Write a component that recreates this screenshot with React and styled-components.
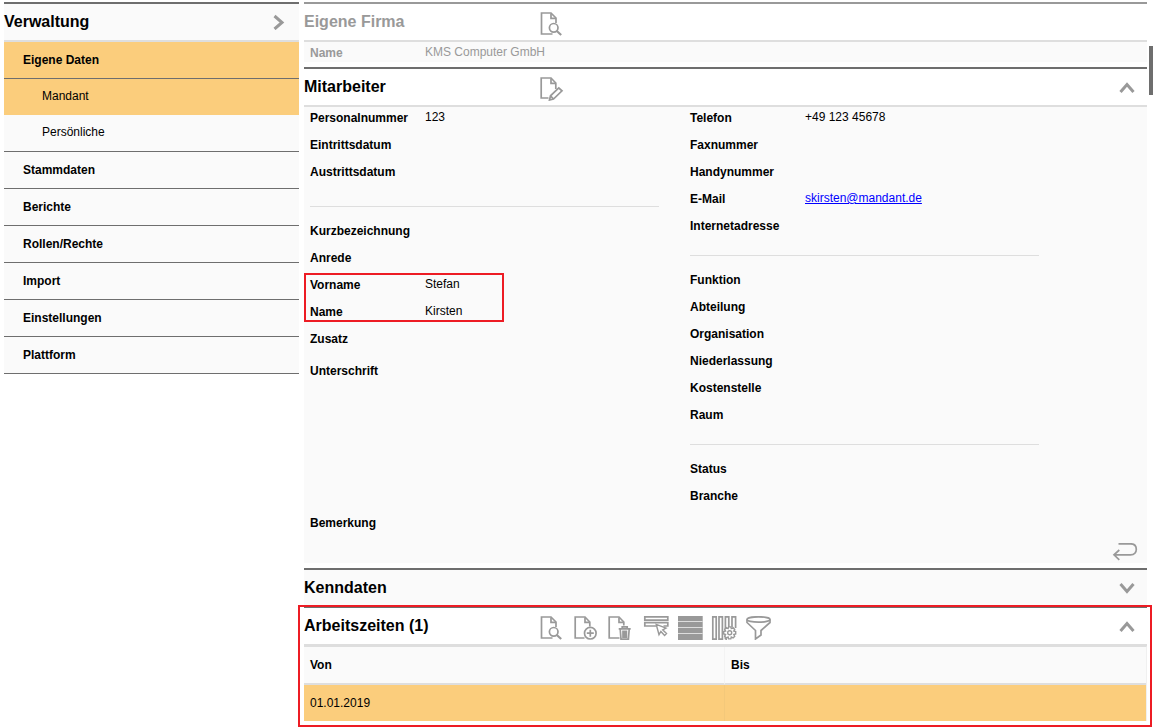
import React, { useState } from 'react'
import styled, { createGlobalStyle, css } from 'styled-components'

const menu = [
  { label: 'Eigene Daten', children: ['Mandant', 'Persönliche'] },
  { label: 'Stammdaten' },
  { label: 'Berichte' },
  { label: 'Rollen/Rechte' },
  { label: 'Import' },
  { label: 'Einstellungen' },
  { label: 'Plattform' },
]

const DocOutline = ({ cut }) => (
  <>
    <path d={cut} />
    <path d="M11 1.5V6.3H16" />
  </>
)

const ViewIcon = () => (
  <Icon viewBox="0 0 28 24">
    <DocOutline cut="M12.5 22H1.5V1H11L16 6V11" />
    <circle cx="13.7" cy="15.8" r="4.3" fill="#fff" />
    <path d="M16.8 19L21.2 23" strokeWidth="2.2" />
  </Icon>
)

const EditIcon = () => (
  <Icon viewBox="0 0 28 24">
    <DocOutline cut="M8.5 21H1.2V1H11L15.8 6V12" />
    <path d="M9.5 23L10.5 18.8L18.8 11L22 13.8L13.5 22Z M10.5 18.8L13.5 22" />
  </Icon>
)

const AddIcon = () => (
  <Icon viewBox="0 0 28 24">
    <DocOutline cut="M10.5 22H1.2V1H11L15.8 6V10.5" />
    <circle cx="16.3" cy="17.2" r="5.8" />
    <path d="M16.3 13.7V20.7M12.8 17.2H19.8" />
  </Icon>
)

const DeleteIcon = () => (
  <Icon viewBox="0 0 28 24">
    <DocOutline cut="M11.5 22H1.2V1H11L15.8 6V9.5" />
    <path d="M10.7 12.8H22.7M14.2 12.5V10.8H19.2V12.5M12.2 13L13 23.2H20.4L21.2 13M15 14.5V22M16.7 14.5V22M18.4 14.5V22" />
  </Icon>
)

const SelectIcon = () => (
  <Icon viewBox="0 0 28 24">
    <path d="M2.8 .8H25.8V4.2H2.8ZM14 10H2.8V6.6H25.8V10H21.5" />
    <path d="M14.2 8.3L24 12L20.7 13.8L24.5 17.6L22.6 19.4L18.9 15.5L17 18.7Z" fill="#fff" strokeWidth="1.4" />
  </Icon>
)

const ListIcon = () => (
  <Icon viewBox="0 0 28 24">
    <path d="M2 0H26.7V24H2Z" fill="#999" stroke="none" />
    <path d="M2 5.5H26.7M2 11.5H26.7M2 17.5H26.7" stroke="#ddd" strokeWidth="1" />
  </Icon>
)

const ColumnsIcon = () => (
  <Icon viewBox="0 0 28 24">
    <path d="M2.8 .8H6.2V23.2H2.8ZM9 .8H12.4V23.2H9ZM15.4 23.2V.8H18.8V11M22 11V.8H25.6V12M15.4 23.2H17" />
    <path d="M18.6 10.9h2.2l.5 1.7 1.8-.9 1.6 1.6-.9 1.8 1.9.5v2.4l-1.9.5.9 1.8-1.6 1.6-1.8-.9-.5 1.9h-2.2l-.5-1.9-1.8.9-1.6-1.6.9-1.8-1.9-.5v-2.4l1.9-.5-.9-1.8 1.6-1.6 1.8.9Z" fill="#fff" strokeWidth="1.4" />
    <circle cx="19.7" cy="16.8" r="2" strokeWidth="1.4" />
  </Icon>
)

const FilterIcon = () => (
  <Icon viewBox="0 0 28 24">
    <ellipse cx="14.5" cy="3.5" rx="11.5" ry="2.7" />
    <path d="M3 3.5V6.5L11.5 14.5V23L17 19V14.5L26 6.5V3.5" />
  </Icon>
)

const BackIcon = () => (
  <Icon viewBox="0 0 28 24">
    <path d="M8.5 .8H20.5C24.5 .8 26.3 3 26.3 6.2S24.5 11.8 20.5 11.8H4M9.3 7L4 11.8L9.3 16.8" />
  </Icon>
)

const rotation = { up: 0, right: 90, down: 180 }

const Chevron = ({ dir, label }) => (
  <ChevronButton type="button" aria-label={label}>
    <svg width="16" height="16" viewBox="0 0 16 16">
      <path
        d="M1.5 13L8 5.5L14.5 13"
        transform={`rotate(${rotation[dir]} 8 8.5)`}
        fill="none"
        stroke="#999"
        strokeWidth="3"
      />
    </svg>
  </ChevronButton>
)

const Tool = ({ label, children }) => (
  <ToolButton type="button" aria-label={label}>{children}</ToolButton>
)

const Field = ({ label, muted, children }) => (
  <FieldRow $muted={muted}>
    <dt>{label}</dt>
    <dd>{children}</dd>
  </FieldRow>
)

const Sidebar = () => {
  const [active, setActive] = useState('Mandant')

  return (
    <StyledSidebar>
      <SidebarHeader>
        <Title>Verwaltung</Title>
        <Chevron dir="right" label="Menü" />
      </SidebarHeader>
      {menu.map(({ label, children = [] }) => (
        <MenuGroup key={label}>
          <MenuItem
            type="button"
            $active={active === label || children.includes(active)}
            onClick={() => setActive(label)}
          >
            {label}
          </MenuItem>
          {children.length > 0 && (
            <SubMenu>
              {children.map((child) => (
                <SubItem key={child} type="button" $active={active === child} onClick={() => setActive(child)}>
                  {child}
                </SubItem>
              ))}
            </SubMenu>
          )}
        </MenuGroup>
      ))}
    </StyledSidebar>
  )
}

const Company = () => (
  <Section $muted>
    <SectionHeader>
      <Title>Eigene Firma</Title>
      <Toolbar>
        <Tool label="Firma anzeigen"><ViewIcon /></Tool>
      </Toolbar>
    </SectionHeader>
    <Summary>
      <Field label="Name" muted>KMS Computer GmbH</Field>
    </Summary>
  </Section>
)

const Employee = () => (
  <Section>
    <SectionHeader>
      <Title>Mitarbeiter</Title>
      <Toolbar>
        <Tool label="Mitarbeiter bearbeiten"><EditIcon /></Tool>
      </Toolbar>
      <Chevron dir="up" label="Zuklappen" />
    </SectionHeader>
    <Details>
      <Columns>
        <div>
          <Fields $spaced>
            <Field label="Personalnummer">123</Field>
            <Field label="Eintrittsdatum" />
            <Field label="Austrittsdatum" />
          </Fields>
          <Divider />
          <Fields $spaced>
            <Field label="Kurzbezeichnung" />
            <Field label="Anrede" />
            <Marked>
              <Field label="Vorname">Stefan</Field>
              <Field label="Name">Kirsten</Field>
            </Marked>
            <Field label="Zusatz" />
          </Fields>
          <Signature>
            <Field label="Unterschrift" />
          </Signature>
          <Fields>
            <Field label="Bemerkung" />
          </Fields>
        </div>
        <div>
          <Fields>
            <Field label="Telefon">+49 123 45678</Field>
            <Field label="Faxnummer" />
            <Field label="Handynummer" />
            <Field label="E-Mail"><a href="mailto:skirsten@mandant.de">skirsten@mandant.de</a></Field>
            <Field label="Internetadresse" />
          </Fields>
          <Divider />
          <Fields>
            <Field label="Funktion" />
            <Field label="Abteilung" />
            <Field label="Organisation" />
            <Field label="Niederlassung" />
            <Field label="Kostenstelle" />
            <Field label="Raum" />
          </Fields>
          <Divider />
          <Fields>
            <Field label="Status" />
            <Field label="Branche" />
          </Fields>
        </div>
      </Columns>
      <DetailsFooter>
        <Tool label="Zurück"><BackIcon /></Tool>
      </DetailsFooter>
    </Details>
  </Section>
)

const WorkingHours = () => (
  <Section $marked>
    <SectionHeader>
      <Title>Arbeitszeiten (1)</Title>
      <Toolbar>
        <Tool label="Anzeigen"><ViewIcon /></Tool>
        <Tool label="Hinzufügen"><AddIcon /></Tool>
        <Tool label="Löschen"><DeleteIcon /></Tool>
        <Tool label="Auswählen"><SelectIcon /></Tool>
        <Tool label="Liste"><ListIcon /></Tool>
        <Tool label="Spalten"><ColumnsIcon /></Tool>
        <Tool label="Filter"><FilterIcon /></Tool>
      </Toolbar>
      <Chevron dir="up" label="Zuklappen" />
    </SectionHeader>
    <Table>
      <thead>
        <tr>
          <th>Von</th>
          <th>Bis</th>
        </tr>
      </thead>
      <tbody>
        <tr>
          <td>01.01.2019</td>
          <td />
        </tr>
      </tbody>
    </Table>
  </Section>
)

const App = () => (
  <>
    <GlobalStyle />
    <Page>
      <Sidebar />
      <Content>
        <Company />
        <Employee />
        <Section>
          <SectionHeader $collapsed>
            <Title>Kenndaten</Title>
            <Chevron dir="down" label="Aufklappen" />
          </SectionHeader>
        </Section>
        <WorkingHours />
      </Content>
      <ScrollTrack>
        <ScrollThumb />
      </ScrollTrack>
    </Page>
  </>
)

export default App

const GlobalStyle = createGlobalStyle`
  *, *::after {
    box-sizing: border-box;
  }

  body {
    margin: 0;
    background: #fff;
    color: #000;
    font-family: 'Liberation Sans', Arial, sans-serif;
    font-size: 12px;
    line-height: 14px;
  }

  button {
    border: 0;
    padding: 0;
    background: none;
    color: inherit;
    font: inherit;
    cursor: pointer;
  }
`

const redFrame = css`
  content: '';
  position: absolute;
  border: 2px solid #ed1c24;
  pointer-events: none;
`

const Page = styled.div`
  display: flex;
  padding: 2px 0 6px 4px;
`

const StyledSidebar = styled.nav`
  flex: 0 0 295px;
  margin-right: 5px;
`

const SidebarHeader = styled.header`
  display: flex;
  align-items: center;
  justify-content: space-between;
  height: 40px;
  padding-right: 12px;
  border-top: 2px solid #6e6e6e;
  border-bottom: 2px solid #dedede;
  background: #fafafa;
`

const Title = styled.h2`
  margin: 0;
  font-size: 16px;
  line-height: 18px;
  font-weight: bold;
`

const MenuGroup = styled.div`
  border-bottom: 1px solid #6e6e6e;
`

const MenuItem = styled.button`
  display: block;
  width: 100%;
  height: 36px;
  padding-left: 19px;
  background: ${({ $active }) => ($active ? '#fbcd7c' : '#fafafa')};
  font-weight: bold;
  text-align: left;
`

const SubMenu = styled.div`
  border-top: 1px solid #6e6e6e;
`

const SubItem = styled(MenuItem)`
  padding: 0 0 2px 38px;
  font-weight: normal;
`

const Content = styled.main`
  flex: 1;
  min-width: 0;
`

const Section = styled.section`
  position: relative;
  border-top: 2px solid ${({ $muted }) => ($muted ? '#999' : '#6e6e6e')};
  color: ${({ $muted }) => ($muted ? '#999' : '#000')};

  ${({ $marked }) => $marked && css`
    &::after {
      ${redFrame}
      inset: -3px -5px -6px -6px;
    }
  `}
`

const SectionHeader = styled.header`
  display: flex;
  align-items: center;
  height: ${({ $collapsed }) => ($collapsed ? '36px' : '38px')};
  padding-right: 12px;
  border-bottom: ${({ $collapsed }) => ($collapsed ? '0' : '2px solid #dedede')};
  background: ${({ $collapsed }) => ($collapsed ? '#fafafa' : '#fff')};

  ${Title} {
    width: 236px;
  }
`

const Toolbar = styled.div`
  display: flex;
  padding-top: 4px;
`

const ToolButton = styled.button`
  width: 34px;
  height: 24px;
  text-align: left;
`

const Icon = styled.svg`
  display: block;
  width: 28px;
  height: 24px;
  fill: none;
  stroke: #999;
  stroke-width: 1.7;
`

const ChevronButton = styled.button`
  width: 16px;
  height: 16px;
  margin-left: auto;

  svg {
    display: block;
  }
`

const Summary = styled.dl`
  height: 20px;
  margin: 0 0 5px;
  padding: 4px 6px 0;
  background: #fafafa;
`

const Details = styled.div`
  margin-bottom: 5px;
  padding: 4px 0 0 6px;
  background: #fafafa;
`

const Columns = styled.div`
  display: grid;
  grid-template-columns: 1fr 1fr;
  column-gap: 31px;
  padding-right: 108px;
`

const Fields = styled.dl`
  margin: 0;
  padding-bottom: ${({ $spaced }) => ($spaced ? '5px' : '0')};
`

const Signature = styled(Fields)`
  height: 152px;
`

const Marked = styled.div`
  position: relative;

  &::after {
    ${redFrame}
    top: -5px;
    bottom: 10px;
    left: -6px;
    width: 200px;
  }
`

const FieldRow = styled.div`
  display: grid;
  grid-template-columns: 115px 1fr;
  height: ${({ $muted }) => ($muted ? '14px' : '27px')};

  dt {
    font-weight: bold;
  }

  dd {
    margin: 0;
    line-height: 12px;
  }

  a {
    color: #0000ff;
  }
`

const Divider = styled.hr`
  height: 1px;
  margin: 9px 0 17px;
  border: 0;
  background: #dedede;
`

const DetailsFooter = styled.div`
  display: flex;
  justify-content: flex-end;
  height: 20px;
  padding-right: 3px;
`

const Table = styled.table`
  width: 100%;
  border-collapse: separate;
  border-spacing: 0;
  border-top: 1px solid #dedede;
  border-right: 1px solid #f0f0f0;
  table-layout: fixed;

  th, td {
    height: 36px;
    padding: 0 6px;
    text-align: left;
  }

  th {
    height: 38px;
    border-bottom: 2px solid #dedede;
    background: #fafafa;
  }

  td {
    background: #fbcd7c;
  }

  th:first-child {
    border-right: 1px solid #f3f3f3;
  }

  td:first-child {
    border-right: 1px solid #f3c87a;
  }
`

const ScrollTrack = styled.div`
  flex: 0 0 4px;
  margin-left: 2px;
  padding-top: 44px;
`

const ScrollThumb = styled.div`
  height: 49px;
  background: #6e6e6e;
`
